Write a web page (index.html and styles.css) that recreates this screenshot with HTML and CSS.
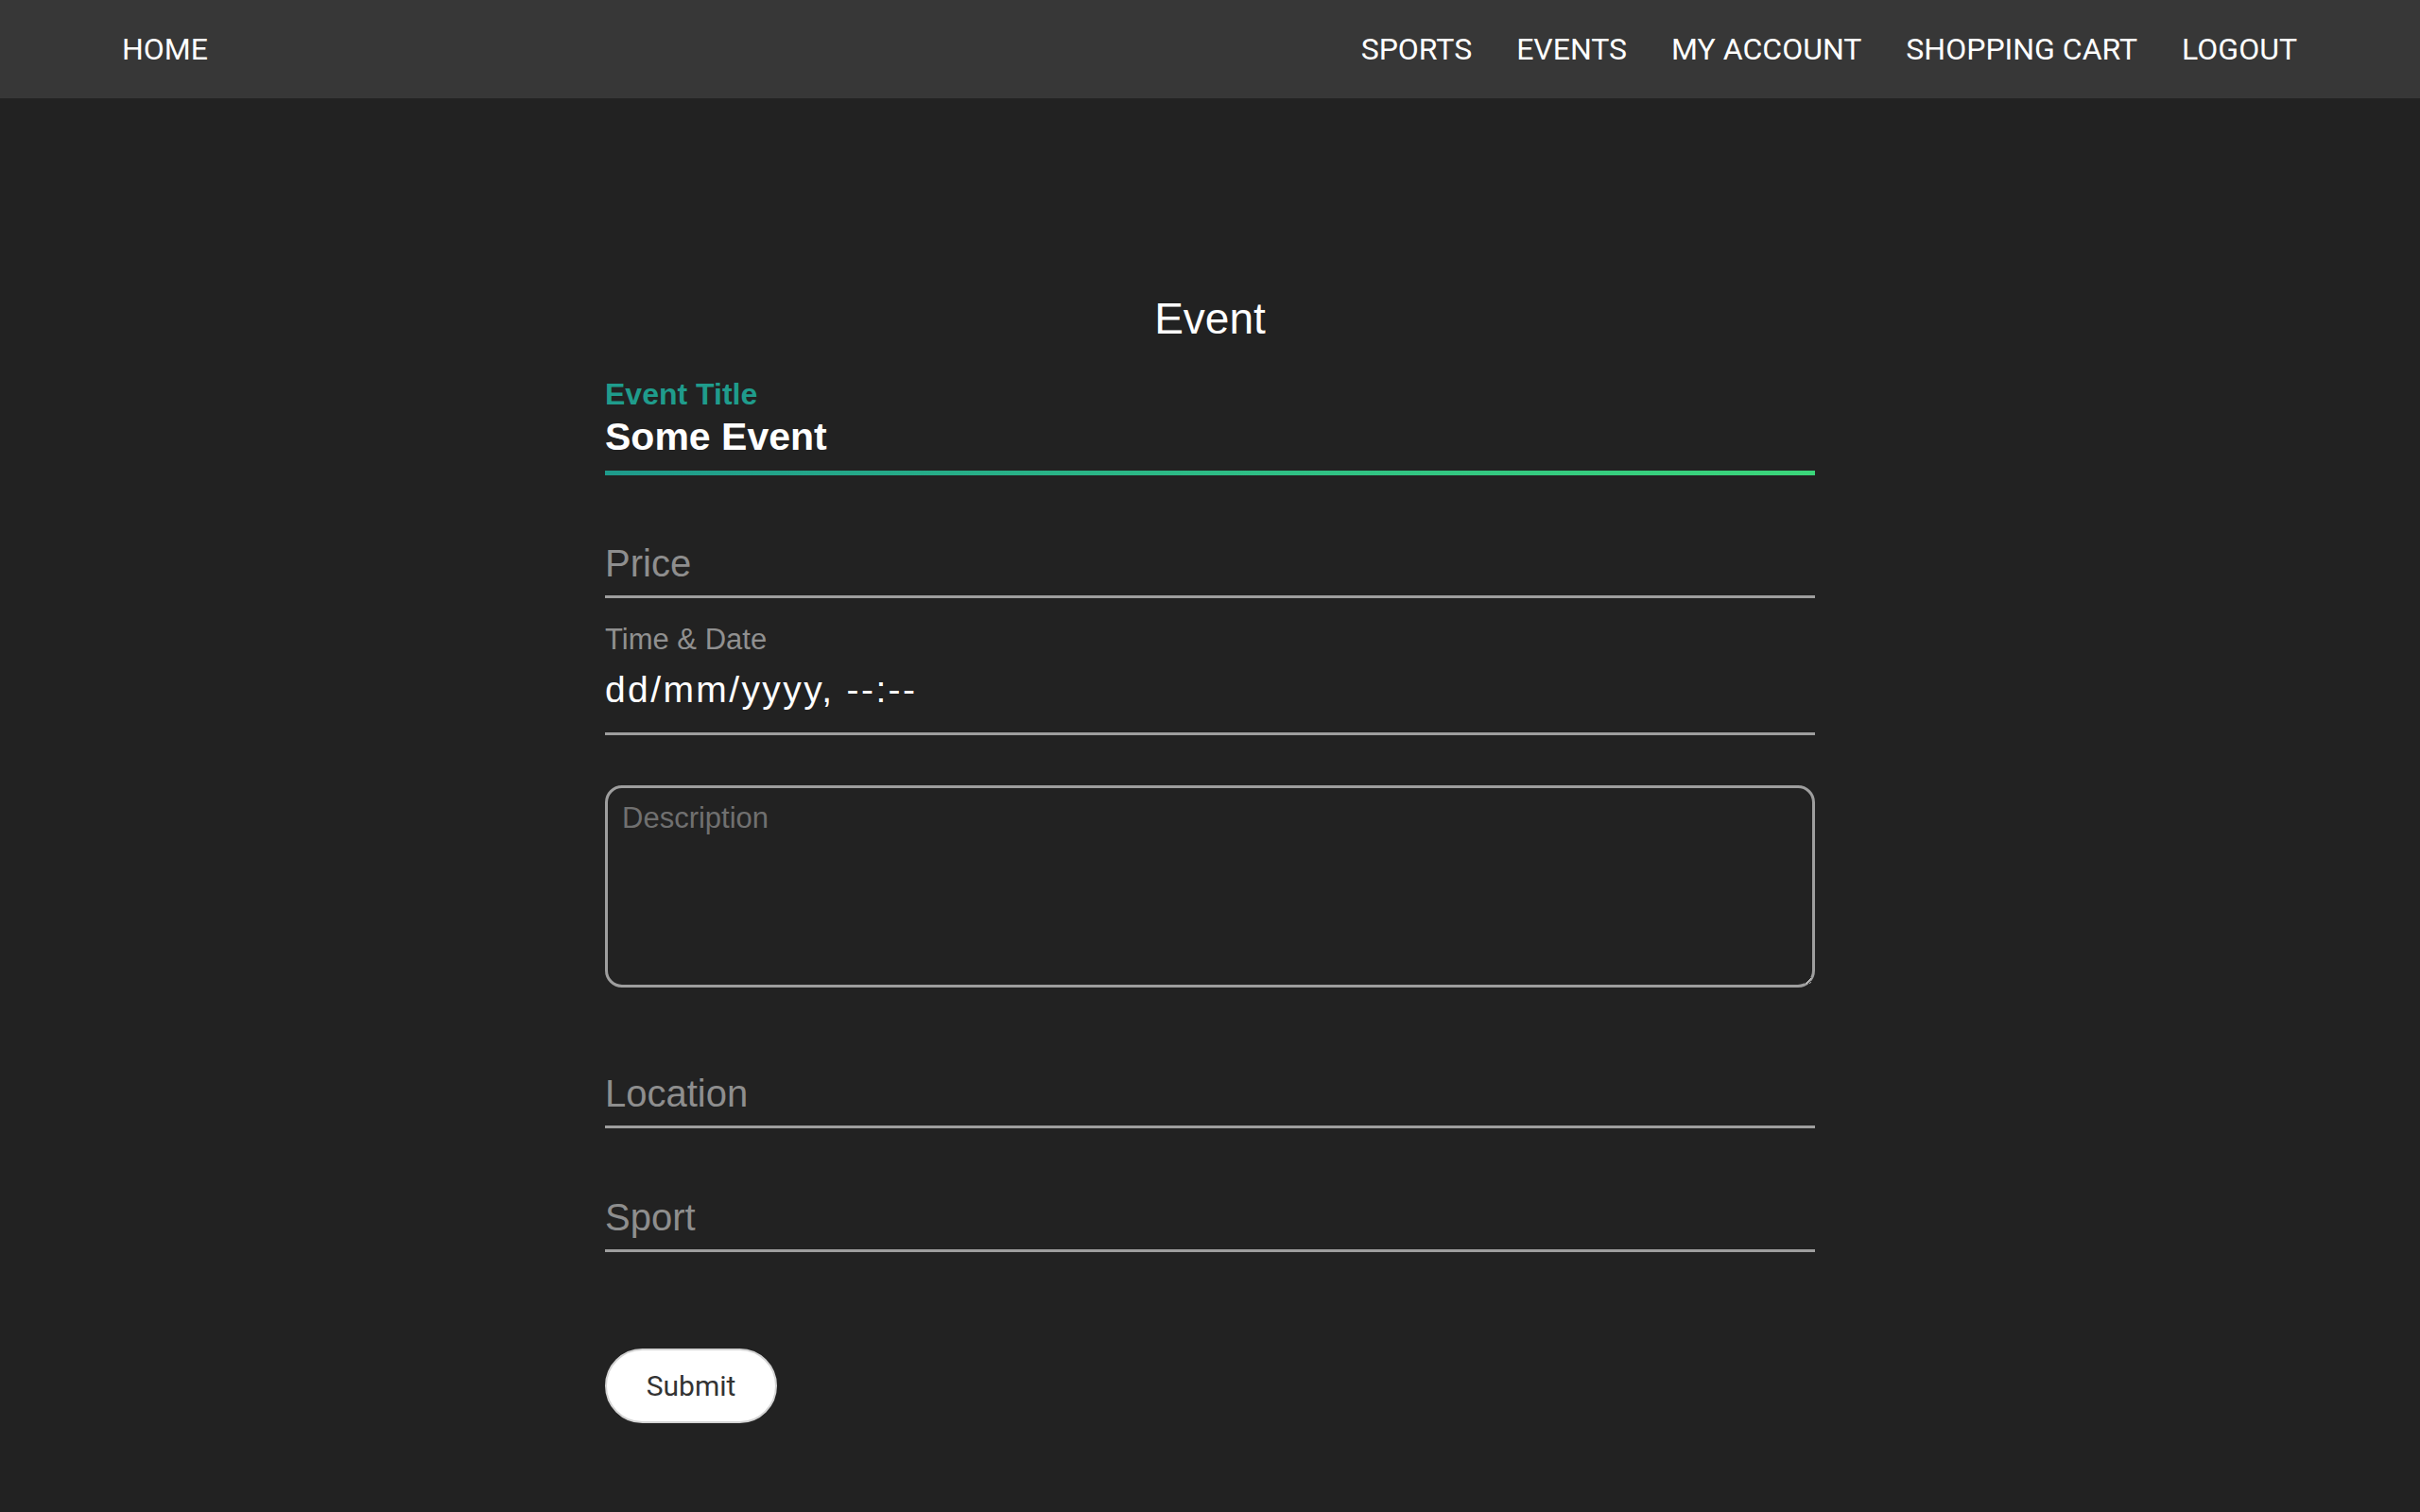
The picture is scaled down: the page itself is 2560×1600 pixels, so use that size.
FILE: index.html
```html
<!DOCTYPE html>
<html lang="en">
<head>
<meta charset="utf-8">
<title>Event</title>
<link rel="stylesheet" href="styles.css">
</head>
<body>
<nav class="navbar">
  <a class="nav-link" href="#">HOME</a>
  <div class="nav-right">
    <a class="nav-link" href="#">SPORTS</a>
    <a class="nav-link" href="#">EVENTS</a>
    <a class="nav-link" href="#">MY ACCOUNT</a>
    <a class="nav-link" href="#">SHOPPING CART</a>
    <a class="nav-link" href="#">LOGOUT</a>
  </div>
</nav>
<main class="page">
  <form class="event-form">
    <h1 class="form-title">Event</h1>
    <div class="field field-active">
      <label class="active-label" for="title">Event Title</label>
      <input class="line-input title-input" id="title" type="text" value="Some Event">
    </div>
    <div class="field field-price">
      <input class="line-input" type="text" placeholder="Price">
    </div>
    <div class="field field-date">
      <span class="date-label">Time &amp; Date</span>
      <div class="date-value">dd/mm/yyyy, --:--</div>
    </div>
    <textarea class="description" placeholder="Description"></textarea>
    <div class="field field-location">
      <input class="line-input" type="text" placeholder="Location">
    </div>
    <div class="field field-sport">
      <input class="line-input" type="text" placeholder="Sport">
    </div>
    <button class="submit" type="button">Submit</button>
  </form>
</main>
</body>
</html>
```

FILE: styles.css
```css
* {
  box-sizing: border-box;
}

html, body {
  margin: 0;
  padding: 0;
  background: #222222;
  min-height: 100%;
}

body {
  font-family: "Liberation Sans", Arial, sans-serif;
  color: #ffffff;
}

.navbar {
  height: 104px;
  background: #373737;
  display: flex;
  align-items: center;
  justify-content: space-between;
  padding: 0 130px 0 129px;
}

.nav-right {
  display: flex;
  gap: 47px;
}

.nav-link {
  font-family: Roboto, "Liberation Sans", sans-serif;
  font-size: 32px;
  font-weight: 400;
  color: #ffffff;
  text-decoration: none;
  line-height: 37px;
}

.page {
  display: flex;
  justify-content: center;
  padding-top: 207px;
  padding-bottom: 80px;
}

.event-form {
  width: 1280px;
  display: flex;
  flex-direction: column;
}

.form-title {
  margin: 0;
  text-align: center;
  font-size: 46px;
  font-weight: 400;
  line-height: 53px;
  color: #ffffff;
}

.field {
  display: flex;
  flex-direction: column;
}

.field-active {
  margin-top: 35px;
}

.active-label {
  font-size: 32px;
  font-weight: 700;
  line-height: 37px;
  color: #1f9c8c;
}

.line-input {
  display: block;
  width: 100%;
  height: 60px;
  margin: 0;
  padding: 0 0 11px 0;
  border: 0;
  border-bottom: 3px solid #9e9e9e;
  background: transparent;
  color: #ffffff;
  font-family: "Liberation Sans", Arial, sans-serif;
  font-size: 40px;
  line-height: 46px;
  outline: none;
}

.line-input::placeholder {
  color: #8e8e8e;
  opacity: 1;
}

.title-input {
  margin-top: 3px;
  height: 64px;
  padding: 0 0 12px 0;
  font-size: 41px;
  font-weight: 700;
  line-height: 47px;
  border-bottom: 5px solid transparent;
  border-image: linear-gradient(to right, #1e9a8b, #2fbf85 55%, #3bd67a) 1;
}

.field-price {
  margin-top: 70px;
}

.field-date {
  margin-top: 26px;
}

.date-label {
  font-size: 31px;
  line-height: 36px;
  color: #909090;
}

.date-value {
  margin-top: 13px;
  font-size: 39px;
  line-height: 44px;
  letter-spacing: 2.4px;
  color: #ffffff;
  padding-bottom: 23px;
  border-bottom: 3px solid #9e9e9e;
}

.description {
  display: block;
  margin-top: 53px;
  width: 100%;
  height: 214px;
  padding: 14px 15px;
  border: 3px solid #9e9e9e;
  border-radius: 18px;
  background: transparent;
  color: #ffffff;
  font-family: "Liberation Sans", Arial, sans-serif;
  font-size: 31px;
  line-height: 36px;
  outline: none;
  color-scheme: dark;
}

.description::placeholder {
  color: #707070;
  opacity: 1;
}

.field-location {
  margin-top: 89px;
}

.field-sport {
  margin-top: 71px;
}

.submit {
  margin-top: 102px;
  align-self: flex-start;
  width: 182px;
  height: 79px;
  border: 2px solid #d4d4d4;
  border-radius: 40px;
  background: #ffffff;
  color: #333333;
  font-family: Roboto, "Liberation Sans", sans-serif;
  font-size: 30px;
  cursor: pointer;
}
```
